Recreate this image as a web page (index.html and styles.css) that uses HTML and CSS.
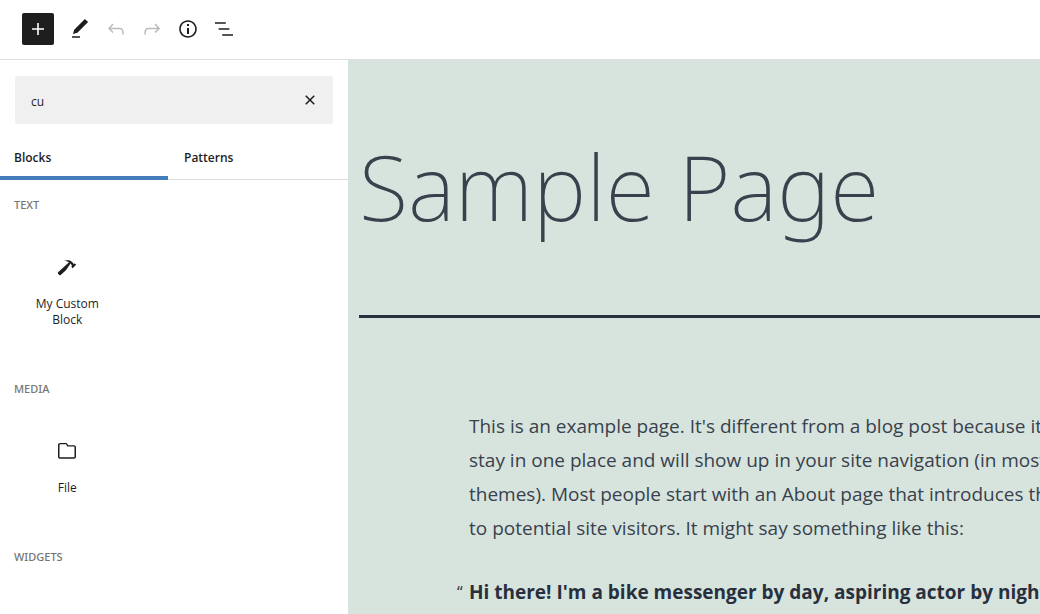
FILE: index.html
```html
<!DOCTYPE html>
<html lang="en">
<head>
  <meta charset="UTF-8" />
  <meta name="viewport" content="width=device-width, initial-scale=1.0"/>
  <title>Edit Page</title>
  <link rel="stylesheet" href="styles.css">
</head>
<body>
  <header class="toolbar">
    <button class="tool inserter-toggle" type="button" aria-label="Toggle block inserter">
      <svg viewBox="0 0 24 24"><path d="M18 11.2h-5.2V6h-1.6v5.2H6v1.6h5.2V18h1.6v-5.2H18z"/></svg>
    </button>
    <button class="tool" type="button" aria-label="Tools">
      <svg viewBox="0 0 24 24"><path d="M20.1 5.1L16.9 2 6.2 12.7l-1.3 4.4 4.5-1.3L20.1 5.1zM4 20.8h8v-1.5H4v1.5z"/></svg>
    </button>
    <button class="tool" type="button" aria-label="Undo" disabled>
      <svg viewBox="0 0 24 24"><path d="M18.3 11.7c-.6-.6-1.4-.9-2.3-.9H6.7l2.9-3.3-1.1-1-4.5 5L8.5 16l1-1-2.7-2.7H16c.5 0 .9.2 1.3.5 1 1 1 3.4 1 4.5v.3h1.5v-.2c0-1.5 0-4.3-1.5-5.7z"/></svg>
    </button>
    <button class="tool" type="button" aria-label="Redo" disabled>
      <svg viewBox="0 0 24 24"><path d="M15.6 6.5l-1.1 1 2.9 3.3H8c-.9 0-1.7.3-2.3.9-1.4 1.5-1.4 4.2-1.4 5.6v.2h1.5v-.3c0-1.1 0-3.5 1-4.5.3-.3.7-.5 1.3-.5h9.2L14.5 15l1.1 1.1 4.6-4.6-4.6-5z"/></svg>
    </button>
    <button class="tool" type="button" aria-label="Details">
      <svg viewBox="0 0 24 24"><path d="M12 3.2c-4.8 0-8.8 3.9-8.8 8.8 0 4.8 3.9 8.8 8.8 8.8 4.8 0 8.8-3.9 8.8-8.8 0-4.8-4-8.8-8.8-8.8zm0 16c-4 0-7.2-3.3-7.2-7.2C4.8 8 8 4.8 12 4.8s7.2 3.3 7.2 7.2c0 4-3.2 7.2-7.2 7.2zM11 17h2v-6h-2v6zm0-8h2V7h-2v2z"/></svg>
    </button>
    <button class="tool" type="button" aria-label="List view">
      <svg viewBox="0 0 24 24"><path d="M13.8 5.2H3v1.5h10.8V5.2zm-3.6 12v1.5H21v-1.5H10.2zm7.2-6H6.6v1.5h10.8v-1.5z"/></svg>
    </button>
  </header>

  <div class="editor">
    <aside class="inserter">
      <div class="search">
        <input class="search-input" id="block-search" type="text" value="cu" aria-label="Search for blocks and patterns">
        <button class="search-reset" type="button" aria-label="Reset search">
          <svg viewBox="0 0 24 24"><path d="M12 13.06l3.712 3.713 1.061-1.06L13.061 12l3.712-3.712-1.06-1.06L12 10.938 8.288 7.227l-1.061 1.06L10.939 12l-3.712 3.712 1.06 1.061L12 13.061z"/></svg>
        </button>
      </div>

      <div class="tabs" role="tablist">
        <button class="tab active" type="button" role="tab" aria-selected="true">Blocks</button>
        <button class="tab" type="button" role="tab" aria-selected="false">Patterns</button>
      </div>

      <section class="category">
        <h2 class="category-title">Text</h2>
        <div class="block-list">
          <button class="block-item" type="button">
            <svg class="dashicon" viewBox="0 0 20 20"><path d="M17.7 6.32l1.41 1.42-3.47 3.41-1.42-1.42.84-.82c-.32-.76-.81-1.57-1.51-2.31l-4.61 6.59-5.26 4.7c-.39.39-1.02.39-1.42 0l-1.2-1.21c-.39-.39-.39-1.02 0-1.41l10.97-9.92c-1.37-.86-3.21-1.46-5.67-1.48 2.7-.82 4.95-.93 6.58-.3 1.7.66 2.82 2.2 3.91 3.58z"/></svg>
            <span>My Custom Block</span>
          </button>
        </div>
      </section>

      <section class="category">
        <h2 class="category-title">Media</h2>
        <div class="block-list">
          <button class="block-item" type="button">
            <svg viewBox="0 0 24 24"><path d="M19 6.2h-5.9l-.6-1.1c-.3-.7-1-1.1-1.8-1.1H5c-1.1 0-2 .9-2 2v11.8c0 1.1.9 2 2 2h14c1.1 0 2-.9 2-2V8.2c0-1.1-.9-2-2-2zm.5 11.6c0 .3-.2.5-.5.5H5c-.3 0-.5-.2-.5-.5V5.8c0-.3.2-.5.5-.5h5.8c.2 0 .4.1.4.3l1 2H19c.3 0 .5.2.5.5v9.7z"/></svg>
            <span>File</span>
          </button>
        </div>
      </section>

      <section class="category">
        <h2 class="category-title">Widgets</h2>
      </section>
    </aside>

    <main class="canvas">
      <h1 class="page-title">Sample Page</h1>
      <div class="content">
        <p>This is an example page. It's different from a blog post because it will<br>
        stay in one place and will show up in your site navigation (in most<br>
        themes). Most people start with an About page that introduces them<br>
        to potential site visitors. It might say something like this:</p>
        <blockquote>Hi there! I'm a bike messenger by day, aspiring actor by night, and</blockquote>
      </div>
    </main>
  </div>
</body>
</html>
```

FILE: styles.css
```css
* {
  box-sizing: border-box;
}

body {
  display: flex;
  flex-direction: column;
  height: 100vh;
  margin: 0;
  overflow: hidden;
  background: #fff;
  color: #1e1e1e;
  font-family: "Segoe UI", "Open Sans", sans-serif;
  font-size: 13px;
}

button {
  padding: 0;
  border: none;
  background: none;
  color: inherit;
  font: inherit;
  cursor: pointer;
}

svg {
  display: block;
  width: 24px;
  height: 24px;
  fill: currentColor;
}

.toolbar {
  display: flex;
  flex-shrink: 0;
  align-items: center;
  height: 60px;
  padding: 0 22px 1px;
  border-bottom: 1px solid #e0e0e0;
}

.tool {
  display: flex;
  align-items: center;
  justify-content: center;
  width: 36px;
  height: 36px;
}

.tool:disabled {
  color: #bbb;
  cursor: default;
}

.inserter-toggle {
  width: 32px;
  height: 32px;
  margin-right: 8px;
  border-radius: 2px;
  background: #1e1e1e;
  color: #fff;
}

.editor {
  display: flex;
  flex: 1;
  min-height: 0;
}

/* inserter panel */
.inserter {
  flex: 0 0 348px;
  overflow: hidden;
}

.search {
  display: flex;
  align-items: center;
  height: 48px;
  margin: 16px 15px 12px;
  padding: 0 11px 0 16px;
  border-radius: 2px;
  background: #f0f0f0;
}

.search-input {
  flex: 1;
  min-width: 0;
  padding: 2px 0 0;
  border: none;
  outline: none;
  background: none;
  color: #1e1e1e;
  font: inherit;
  font-size: 12px;
}

.tabs {
  display: flex;
  height: 44px;
  border-bottom: 1px solid #ddd;
}

.tab {
  flex: 1;
  padding: 0 16px;
  font-size: 12px;
  font-weight: 600;
  text-align: left;
}

.tab.active {
  flex: 0 0 168px;
  height: 44px;
  padding: 0 14px 1px;
  box-shadow: inset 0 -4px #447cbc;
}

.category-title {
  margin: 0;
  padding: 17px 14px;
  color: #757575;
  font-family: "Segoe UI", "Noto Sans", sans-serif;
  font-size: 11px;
  font-weight: 500;
  line-height: 16px;
  text-transform: uppercase;
}

.block-list {
  display: grid;
  grid-template-columns: repeat(3, 1fr);
  padding: 8px 14px 24px;
}

.block-item {
  display: flex;
  flex-direction: column;
  align-items: center;
  gap: 17px;
  padding: 17px 8px 12px;
  font-size: 12px;
  line-height: 16px;
}

.dashicon {
  width: 20px;
  height: 20px;
  margin: 2px;
}

/* page preview */
.canvas {
  flex: 1;
  min-width: 0;
  padding: 0 0 0 11px;
  overflow: hidden;
  background: #d7e4dd;
  color: #39414d;
}

.page-title {
  margin: 0 0 91px;
  padding: 61px 0 64px;
  border-bottom: 3px solid #28303d;
  font-family: "Segoe UI", "Noto Sans", sans-serif;
  font-size: 90px;
  font-weight: 200;
  line-height: 130px;
}

.content {
  padding-left: 110px;
  font-size: 19px;
  line-height: 34px;
  white-space: nowrap;
}

.content p {
  margin: 0 0 30px;
}

.content blockquote {
  position: relative;
  margin: 0;
  color: #28303d;
  font-weight: 700;
}

.content blockquote::before {
  content: "“";
  position: absolute;
  left: -12px;
  font-size: 16px;
  font-weight: 400;
}
```
